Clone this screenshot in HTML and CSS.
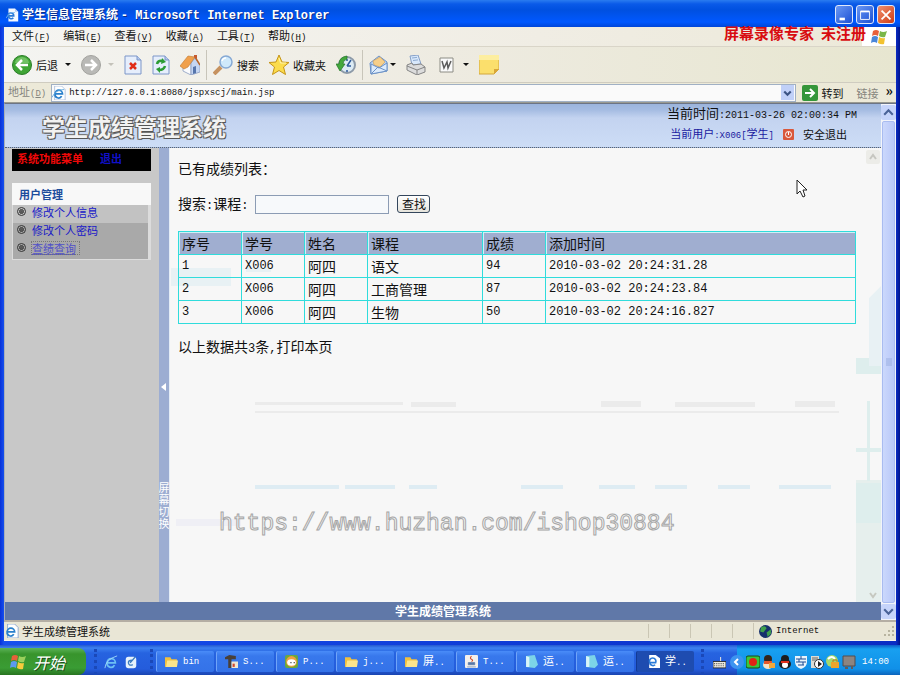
FILE: index.html
```html
<!DOCTYPE html>
<html lang="zh-CN">
<head>
    <meta charset="UTF-8">
    <meta name="viewport" content="width=device-width, initial-scale=1.0">
    <title>学生信息管理系统</title>
    <link rel="stylesheet" href="styles.css">
</head>
<body>
    <div class="window">
        <div class="titlebar">
            <svg class="icon16" viewBox="0 0 16 16"><path d="M3 0h8l4 4v12H3z" fill="#f4f8ff"/><path d="M11 0v4h4" fill="#b8cdf0"/><path d="M9 9H2.500a3.500 3.500 0 1 1 7 0zM3 9a3.500 3.500 0 0 0 6 2.500" fill="none" stroke="#2a7ad8" stroke-width="2"/><path d="M0 12Q4 4 11 5" fill="none" stroke="#73b5ee"/></svg>
            <h1>学生信息管理系统 <span class="mono">- Microsoft Internet Explorer</span></h1>
            <button class="win-btn" aria-label="最小化"><svg viewBox="0 0 18 18"><path d="M4 12h6v3H4z" fill="#fff"/></svg></button>
            <button class="win-btn" aria-label="最大化"><svg viewBox="0 0 18 18"><path d="M4 5h10v9H4z" fill="none" stroke="#fff"/><path d="M4 4h10v2H4z" fill="#fff"/></svg></button>
            <button class="win-btn close" aria-label="关闭"><svg viewBox="0 0 18 18"><path d="M4 4l10 10M14 4L4 14" stroke="#fff" stroke-width="2"/></svg></button>
        </div>

        <nav class="menubar">
            <button>文件<span class="mono">(<u>F</u>)</span></button>
            <button>编辑<span class="mono">(<u>E</u>)</span></button>
            <button>查看<span class="mono">(<u>V</u>)</span></button>
            <button>收藏<span class="mono">(<u>A</u>)</span></button>
            <button>工具<span class="mono">(<u>T</u>)</span></button>
            <button>帮助<span class="mono">(<u>H</u>)</span></button>
            <div class="flag-box">
                <svg class="icon18" viewBox="0 0 18 18"><path d="M3 3q3-2 6 0L8 8Q5 6 2 8z" fill="#e8603a"/><path d="M10 3q3 2 7 0l-2 6q-3 1-6-1z" fill="#7ab648"/><path d="M2 9q3-2 6 0l-1 6q-3-2-6 0z" fill="#4a86d8"/><path d="M9 9q3 2 6 1l-1 6q-3 1-6-1z" fill="#f2c230"/></svg>
            </div>
            <div class="recorder-mark"><span>屏幕录像专家</span><span>未注册</span></div>
        </nav>

        <div class="toolbar">
            <button class="tool"><svg class="icon20" viewBox="0 0 20 20"><circle cx="10" cy="10" r="9.500" fill="#3fa535" stroke="#2b7d28"/><path d="M3 8a7 6 0 0 1 14 0" fill="#8fd480" opacity=".6"/><path d="M16 10H6M10 5l-5 5 5 5" fill="none" stroke="#fff" stroke-width="2.500"/></svg>后退</button>
            <span class="drop"></span>
            <button class="tool" aria-label="前进"><svg class="icon20" viewBox="0 0 20 20"><circle cx="10" cy="10" r="9.500" fill="#b9b9b6" stroke="#a2a29e"/><path d="M4 10h10M10 5l5 5-5 5" fill="none" stroke="#fff" stroke-width="2.500"/></svg></button>
            <span class="drop pale"></span>
            <button class="tool" aria-label="停止"><svg class="icon18" viewBox="0 0 18 20"><path d="M1 1h12l4 4v14H1z" fill="#e6eefc" stroke="#7c96c8"/><path d="M13 1v4h4" fill="#b4c8ec" stroke="#7c96c8"/><path d="M6 8l6 6M12 8l-6 6" stroke="#e02c18" stroke-width="2.500"/></svg></button>
            <button class="tool" aria-label="刷新"><svg class="icon18" viewBox="0 0 18 20"><path d="M1 1h12l4 4v14H1z" fill="#e6eefc" stroke="#7c96c8"/><path d="M13 1v4h4" fill="#b4c8ec" stroke="#7c96c8"/><path d="M5 9q1-4 6-3M13 11q-1 4-6 4" fill="none" stroke="#2c9c34" stroke-width="2.500"/><path d="M10 3l4 4-5 2zM8 12v6l-4-4z" fill="#2c9c34"/></svg></button>
            <button class="tool" aria-label="主页"><svg class="icon20" viewBox="0 0 20 20"><path d="M3 11l8-5v14l-8-4z" fill="#fafbfd" stroke="#8a9cc0" stroke-width=".8"/><path d="M11 20V8l4-5 5 7v7z" fill="#c5d6f2" stroke="#8a9cc0" stroke-width=".8"/><path d="M0 11L8 1l7 1-7 10-4 2z" fill="#f0a04c" stroke="#c07830" stroke-width=".6"/><path d="M15 2l5 8" stroke="#b8652a" stroke-width="1.500"/><path d="M14 0h3v4l-3-2z" fill="#c65a30"/><path d="M13 12l3-1v7l-3 1z" fill="#5675ac"/></svg></button>
            <span class="sep"></span>
            <button class="tool"><svg class="icon20" viewBox="0 0 20 20"><path d="M8 12l-7 7" stroke="#c69260" stroke-width="4"/><circle cx="13" cy="7" r="6" fill="#cfe9fb" stroke="#86a9d4" stroke-width="1.500"/><path d="M9 6a4 4 0 0 1 4-3" fill="none" stroke="#fff" stroke-width="1.500"/></svg>搜索</button>
            <button class="tool"><svg class="icon20" viewBox="0 0 20 20"><path d="M10 0l3 7 7 .5-5.500 4.500 2 7.500L10 15.500 3.500 19.500l2-7.500L0 7.500 7 7z" fill="#fbdc4c" stroke="#c59416"/><path d="M10 3l1.500 5H17" fill="none" stroke="#fff4b0"/></svg>收藏夹</button>
            <button class="tool" aria-label="历史"><svg class="icon20" viewBox="0 0 20 20"><circle cx="11" cy="10" r="8" fill="#dcebf4" stroke="#8d9aa8" stroke-width="2"/><path d="M11 11l4-6M11 11h4M11 4v2M11 15v2" stroke="#2c5a9a" stroke-width="1.500"/><path d="M11 1Q3 2 3 9H0l4 7 5-7H7q0-4 4-5z" fill="#43a83c" stroke="#25752a" stroke-width=".7"/></svg></button>
            <span class="sep"></span>
            <button class="tool"><svg class="icon20" viewBox="0 0 20 20"><path d="M1 8l9-7 8 6v9L2 19z" fill="#b6d3f6" stroke="#6b91c6"/><path d="M4 6l7-4 5 5-5 5-6-2z" fill="#f6cf8a" stroke="#cda464" stroke-width=".7"/><path d="M2 9l8 4 8-5v8L2 19z" fill="#dcebfc" stroke="#6b91c6"/><path d="M2 19l7-7 9 4" fill="none" stroke="#6b91c6"/></svg><span class="drop" title="邮件"></span></button>
            <button class="tool" aria-label="打印"><svg class="icon20" viewBox="0 0 20 20"><path d="M4 1l8-1 3 9-9 1z" fill="#d8e8fb" stroke="#86a0c8"/><path d="M6 3l5-.6M7 5.500l5-.6" stroke="#8eabd2"/><path d="M1 10l5-2 1 2 8-1 4 3v5l-8 3-10-5z" fill="#dcdcdc" stroke="#858585"/><path d="M1 11l10 4 8-3M11 15v5" fill="none" stroke="#858585"/></svg></button>
            <button class="tool" aria-label="编辑"><svg class="icon20" viewBox="0 0 20 20"><path d="M4 3h13v14H4z" fill="#fafafa" stroke="#8c8c84"/><path d="M6 6l2 7 3-6 1 6 3-7" fill="none" stroke="#5c5c5c" stroke-width="1.500"/></svg></button>
            <span class="drop"></span>
            <button class="tool" aria-label="便笺"><svg class="icon20" viewBox="0 0 20 20"><path d="M0 0h20v14l-5 5H0z" fill="#fbdf6c" stroke="#d2a63a"/><path d="M0 0h20v5H0z" fill="#fdeea0"/><path d="M20 14h-5v5z" fill="#d9a738"/></svg></button>
        </div>

        <div class="addressbar">
            <label for="address">地址<span class="mono">(<u>D</u>)</span></label>
            <div class="address-box">
                <svg class="icon14" viewBox="0 0 16 16"><path d="M3 0h8l4 4v12H3z" fill="#fff" stroke="#9ab0d4" stroke-width=".8"/><path d="M12 9H3.500a4 4 0 1 1 8.500 0zM3.500 9a4 4 0 0 0 7.500 2.500" fill="none" stroke="#2a80cc" stroke-width="2"/><path d="M0 13Q4 4 14 4" fill="none" stroke="#5fa8dc"/></svg>
                <input type="text" id="address" class="mono" value="http://127.0.0.1:8080/jspxscj/main.jsp">
                <button class="address-drop" aria-label="展开"><svg viewBox="0 0 12 16"><path d="M3 6l3 3 3-3" fill="none" stroke="#3c5484" stroke-width="2"/></svg></button>
            </div>
            <button class="go"><svg class="icon16" viewBox="0 0 16 16"><rect width="16" height="16" rx="2" fill="#35963a"/><path d="M3 8h9M8 4l4 4-4 4" fill="none" stroke="#fff" stroke-width="2"/></svg>转到</button>
            <span class="links">链接</span>
            <span class="more">»</span>
        </div>

        <div class="viewport">
            <div class="page">
                <header class="page-header">
                    <h2>学生成绩管理系统</h2>
                    <div class="page-info">
                        <div class="clock">当前时间<span class="mono">:2011-03-26 02:00:34 PM</span></div>
                        <div class="user">
                            <span class="user-name">当前用户<span class="mono">:X006[</span>学生<span class="mono">]</span></span>
                            <svg class="icon11" viewBox="0 0 11 11"><rect width="11" height="11" rx="1" fill="#d9583c"/><circle cx="5.500" cy="5.500" r="3" fill="none" stroke="#fff"/><path d="M5.500 3v3" stroke="#fff"/></svg>
                            <a href="#">安全退出</a>
                        </div>
                    </div>
                </header>

                <div class="page-body">
                    <aside class="sidebar">
                        <div class="menu-title"><span>系统功能菜单</span><a href="#">退出</a></div>
                        <div class="menu-panel">
                            <h3>用户管理</h3>
                            <ul>
                                <li><a href="#">修改个人信息</a></li>
                                <li class="dark"><a href="#">修改个人密码</a></li>
                                <li class="dark"><a href="#" class="current">查绩查询</a></li>
                            </ul>
                        </div>
                    </aside>
                    <button class="splitter" aria-label="屏幕切换">
                        <svg viewBox="0 0 10 10"><path d="M7 1v8L2 5z" fill="#fff"/></svg>
                        <span>屏幕切换</span>
                    </button>
                    <main class="main">
                        <svg class="haze" viewBox="0 0 710 454" width="710" height="454" aria-hidden="true">
                            <path d="M685 332h25v122h-25z" fill="#e6efed"/>
                            <path d="M685 335h25v40h-25zM696 253h3v80h-3zM685 300h25v4h-25zM685 210h25v16h-25z" fill="#deeeed"/>
                            <path d="M698 150l12-12v80h-12zM0 120h60v18H0zM75 119h25v5H75z" fill="#e8f1f4"/>
                            <path d="M84 254h148v3H84zM84 263h584v2H84zM240 254h45v5h-45zM430 253h40v6h-40zM504 254h80v5h-80zM624 253h40v6h-40z" fill="#ebebeb"/>
                            <path d="M84 337h84v4H84zM174 337h50v4h-50zM238 337h28v4h-28zM350 337h42v4h-42zM428 337h36v4h-36zM484 337h32v4h-32zM547 337h32v4h-32zM608 337h52v4h-52z" fill="#deecf3"/>
                            <path d="M5 371h65v7H5z" fill="#efeff5"/>
                        </svg>
                        <p>已有成绩列表：</p>
                        <form class="search" onsubmit="return false">
                            <label for="course">搜索<span class="mono">:</span>课程<span class="mono">:</span></label>
                            <input type="text" id="course">
                            <button type="submit">查找</button>
                        </form>
                        <table>
                            <thead>
                                <tr><th class="narrow">序号</th><th class="narrow">学号</th><th class="narrow">姓名</th><th class="course">课程</th><th class="narrow">成绩</th><th>添加时间</th></tr>
                            </thead>
                            <tbody>
                                <tr><td class="mono">1</td><td class="mono">X006</td><td>阿四</td><td>语文</td><td class="mono">94</td><td class="mono">2010-03-02 20:24:31.28</td></tr>
                                <tr><td class="mono">2</td><td class="mono">X006</td><td>阿四</td><td>工商管理</td><td class="mono">87</td><td class="mono">2010-03-02 20:24:23.84</td></tr>
                                <tr><td class="mono">3</td><td class="mono">X006</td><td>阿四</td><td>生物</td><td class="mono">50</td><td class="mono">2010-03-02 20:24:16.827</td></tr>
                            </tbody>
                        </table>
                        <p>以上数据共<span class="mono">3</span>条<span class="mono">,</span>打印本页</p>
                        <svg class="inner-arrow top" viewBox="0 0 14 14"><rect width="14" height="14" rx="2" fill="#ecece8"/><path d="M4 9l3-4 3 4" fill="none" stroke="#c6c6c0" stroke-width="2"/></svg>
                        <svg class="inner-arrow bottom" viewBox="0 0 14 14"><path d="M4 5l3 4 3-4" fill="none" stroke="#c6c8c0" stroke-width="2"/></svg>
                        <div class="watermark">https://www.huzhan.com/ishop30884</div>
                    </main>
                </div>

                <footer class="page-footer">学生成绩管理系统</footer>
            </div>
            <div class="scrollbar">
                <button aria-label="向上"><svg viewBox="0 0 14 14"><path d="M3 9l4-4 4 4" fill="none" stroke="#4a6398" stroke-width="2"/></svg></button>
                <div class="thumb"><svg viewBox="0 0 8 8"><path d="M1 1h6M1 3h6M1 5h6M1 7h6" stroke="#9aaee0"/></svg></div>
                <button aria-label="向下"><svg viewBox="0 0 14 14"><path d="M3 5l4 4 4-4" fill="none" stroke="#4a6398" stroke-width="2"/></svg></button>
            </div>
        </div>

        <div class="statusbar">
            <svg class="icon14" viewBox="0 0 16 16"><path d="M3 0h8l4 4v12H3z" fill="#fff" stroke="#6a8cc4" stroke-width=".8"/><path d="M11 9H2.500a4 4 0 1 1 8.500 0zM2.500 9a4 4 0 0 0 7.500 2.500" fill="none" stroke="#2a80cc" stroke-width="2"/></svg>
            <span class="status-text">学生成绩管理系统</span>
            <i></i><i></i><i></i><i></i><i></i>
            <span class="zone"><svg class="icon12" viewBox="0 0 12 12"><circle cx="6" cy="6" r="6" fill="#16306c"/><path d="M2 2q4-2 5 1L4 7 1 6zM7 7l4-3v4l-3 3z" fill="#3fa04c"/></svg><span class="mono">Internet</span></span>
            <svg class="grip" viewBox="0 0 12 12"><path d="M8 1h2v2H8zM8 5h2v2H8zM4 5h2v2H4zM8 9h2v2H8zM4 9h2v2H4zM0 9h2v2H0z" fill="#b8b4a0"/></svg>
        </div>
    </div>

    <div class="taskbar">
        <button class="start"><svg class="icon18" viewBox="0 0 18 18"><path d="M3 3q3-2 6 0L8 8Q5 6 2 8z" fill="#e8603a"/><path d="M10 3q3 2 7 0l-2 6q-3 1-6-1z" fill="#9ad05c"/><path d="M2 9q3-2 6 0l-1 6q-3-2-6 0z" fill="#5c9af0"/><path d="M9 9q3 2 6 1l-1 6q-3 1-6-1z" fill="#f6cc3c"/></svg>开始</button>
        <div class="quick">
            <svg class="icon14" viewBox="0 0 16 16"><path d="M13 9H3.500a4.500 4.500 0 1 1 9.500 0zM3.500 9a4.500 4.500 0 0 0 8.500 2.500" fill="none" stroke="#6cc0f4" stroke-width="2"/><path d="M1 15Q2 5 15 1" fill="none" stroke="#a4dcfa"/></svg>
            <svg class="icon14" viewBox="0 0 16 16"><rect x="2" y="2" width="12" height="13" rx="3" fill="#e6f2fc"/><path d="M5 9q0-3 4-3M5 9q1 4 5 2M7 9l6-7" fill="none" stroke="#3c7cc0" stroke-width="1.500"/></svg>
        </div>
        <div class="tasks">
            <button><svg class="icon12" viewBox="0 0 12 12"><path d="M0 2h5l1 2h5v7H0z" fill="#f0c040"/><path d="M2 5h10l-1 6H1z" fill="#fbe58c"/></svg><span class="mono">bin</span></button>
            <button><svg class="icon12" viewBox="0 0 12 12"><path d="M0 2l4-2 6 1v3H6v8H3V4H0z" fill="#4a4038"/><path d="M6 6h6v6H6z" fill="#efe6d2"/><path d="M7 8h2v3H7z" fill="#d04830"/></svg><span class="mono">S...</span></button>
            <button><svg class="icon12" viewBox="0 0 12 12"><rect width="12" height="12" rx="2" fill="#6ca83c"/><circle cx="6" cy="6" r="5" fill="#f0a040"/><ellipse cx="6" cy="7" rx="4" ry="3" fill="#fff"/><path d="M5 7h1M8 7h1" stroke="#333"/></svg><span class="mono">P...</span></button>
            <button><svg class="icon12" viewBox="0 0 12 12"><path d="M0 2h5l1 2h5v7H0z" fill="#f0c040"/><path d="M2 5h10l-1 6H1z" fill="#fbe58c"/></svg><span class="mono">j...</span></button>
            <button><svg class="icon12" viewBox="0 0 12 12"><path d="M0 2h5l1 2h5v7H0z" fill="#f0c040"/><path d="M2 5h10l-1 6H1z" fill="#fbe58c"/></svg><span>屏<span class="mono">..</span></span></button>
            <button><svg class="icon12" viewBox="0 0 12 12"><rect width="12" height="12" rx="1" fill="#f4f0ec"/><path d="M6 1q-2 2 0 3t0 2" fill="none" stroke="#d04c28"/><path d="M3 7h6v2H3zM2 11h8" fill="#5878a8" stroke="#5878a8" stroke-width=".6"/></svg><span class="mono">T...</span></button>
            <button><svg class="icon12" viewBox="0 0 12 12"><path d="M1 1l8-1 3 9-3 3-8-1z" fill="#7cd4e8"/><path d="M1 1l3 1v9l-3 0z" fill="#d8f4f8"/></svg><span>运<span class="mono">..</span></span></button>
            <button><svg class="icon12" viewBox="0 0 12 12"><path d="M1 1l8-1 3 9-3 3-8-1z" fill="#7cd4e8"/><path d="M1 1l3 1v9l-3 0z" fill="#d8f4f8"/></svg><span>运<span class="mono">..</span></span></button>
            <button class="active"><svg class="icon12" viewBox="0 0 12 12"><path d="M2 0h6l4 3v9H2z" fill="#fff"/><path d="M8 7H2.500a3 3 0 1 1 5.500 0zM2.500 7a3 3 0 0 0 5 2" fill="none" stroke="#2a7ad8" stroke-width="1.500"/></svg><span>学<span class="mono">..</span></span></button>
        </div>
        <div class="lang"><svg class="icon12" viewBox="0 0 12 12"><path d="M7 5V1" stroke="#ddd"/><rect y="5" width="12" height="6" fill="#f0ece0" stroke="#222" stroke-width=".8"/><path d="M1 7h10M1 9h10" stroke="#555" stroke-dasharray="1 1"/></svg></div>
        <div class="tray">
            <svg class="icon14 chevron" viewBox="0 0 14 14"><circle cx="7" cy="7" r="7" fill="#3c94f0"/><path d="M8 4L5 7l3 3" fill="none" stroke="#fff" stroke-width="2"/></svg>
            <svg class="icon14" viewBox="0 0 14 14"><rect y="1" width="14" height="12" rx="2" fill="#38c83c" stroke="#184818"/><circle cx="7" cy="7" r="4" fill="#e02414"/></svg>
            <svg class="icon14" viewBox="0 0 14 14"><ellipse cx="6" cy="10" rx="5" ry="4" fill="#f4e2c4"/><circle cx="6" cy="4" r="4" fill="#33241c"/><path d="M2 6h8v3H2z" fill="#e4582c"/><path d="M7 8h6v5H7z" fill="#f0a83c"/></svg>
            <svg class="icon14" viewBox="0 0 14 14"><ellipse cx="7" cy="9" rx="6" ry="5" fill="#1c1c1c"/><circle cx="7" cy="4" r="4" fill="#1c1c1c"/><ellipse cx="7" cy="10" rx="3" ry="3" fill="#fff"/><path d="M3 6h8v2H3z" fill="#e0301c"/></svg>
            <svg class="icon14" viewBox="0 0 14 14"><path d="M1 1h12v6q0 5-6 7-6-2-6-7z" fill="#e8f4fc"/><path d="M2 4h10M2 7h10M4 10h6M7 1v3M5 4v3M9 7v3" stroke="#1c4c94"/></svg>
            <svg class="icon14" viewBox="0 0 14 14"><path d="M1 1h8v12H1z" fill="#dcdcd4"/><path d="M2 3h6M2 5h6" stroke="#666"/><circle cx="9" cy="9" r="4.500" fill="#fff" stroke="#333"/><path d="M8 6v6l4-3z" fill="#222"/></svg>
            <svg class="icon14" viewBox="0 0 14 14"><circle cx="6" cy="6" r="6" fill="#a4d86c"/><path d="M2 4q4-4 7 0" fill="none" stroke="#fff" stroke-width="2"/><path d="M5 7h8v6H5z" fill="#eda42c"/><path d="M7 7V5h4v2" fill="none" stroke="#b87818"/></svg>
            <svg class="icon14" viewBox="0 0 14 14"><path d="M1 1h12v10H1z" fill="#8c8480" stroke="#554c4c"/><path d="M3 12h3v2H3zM9 11h2v3H9z" fill="#625c5c"/></svg>
            <span class="mono">14:00</span>
        </div>
    </div>

    <svg class="cursor" viewBox="0 0 12 19"><path d="M1 1v14l3-3 3 6 2-1-2-6h4z" fill="#fff" stroke="#222"/></svg>
</body>
</html>
```

FILE: styles.css
```css
*, *::before {
    box-sizing: border-box;
}
body {
    margin: 0;
    height: 100vh;
    min-height: 500px;
    display: flex;
    flex-direction: column;
    overflow: hidden;
    font-family: "Noto Sans CJK SC", sans-serif;
    font-size: 11px;
    line-height: 16px;
    color: #111;
    background: #245edb;
}
button, input {
    font: inherit;
    color: inherit;
    padding: 0;
    margin: 0;
    border: 0;
    background: none;
}
svg {
    display: block;
    flex: none;
}
h1, h2, h3, p, ul {
    margin: 0;
    padding: 0;
}
a {
    text-decoration: none;
}
.mono {
    font-family: "Liberation Mono", monospace;
    font-size: 9px;
}
.icon11 { width: 11px; height: 11px; }
.icon12 { width: 13px; height: 13px; }
.icon14 { width: 14px; height: 14px; }
.icon16 { width: 16px; height: 16px; }
.icon18 { width: 18px; height: 20px; }
.icon20 { width: 20px; height: 20px; }

/* browser window */
.window {
    flex: 1;
    min-height: 0;
    display: flex;
    flex-direction: column;
    padding: 0 4px 4px;
    background: linear-gradient(90deg, #0831d9, #1650ee 4px, #0a2cc4 calc(100% - 4px), #00138c);
}
.titlebar {
    display: flex;
    align-items: center;
    gap: 3px;
    height: 27px;
    margin: 0 -4px;
    padding: 2px 5px 0 6px;
    color: #fff;
    background: linear-gradient(#2a7cf0, #0a5ae8 4px, #0050e0 10px, #0058ff 22px, #0046d8);
}
.titlebar h1 {
    flex: 1;
    font-size: 12px;
    font-weight: bold;
    text-shadow: 1px 1px #0a2c88;
}
.titlebar h1 .mono {
    font-size: 12px;
}
.titlebar .icon16 {
    width: 13px;
}
.win-btn {
    width: 18px;
    height: 19px;
    border: 1px solid #dfe8fb;
    border-radius: 3px;
    background: linear-gradient(135deg, #6a98f4, #1c50d4);
}
.win-btn.close {
    background: linear-gradient(135deg, #f09070, #d03c14);
}
.menubar {
    position: relative;
    display: flex;
    align-items: center;
    gap: 13px;
    height: 20px;
    padding-left: 8px;
    background: linear-gradient(90deg, #f5f5f2, #f0ede4 60%, #ece9d8);
    border-bottom: 1px solid #d9d5c8;
}
.flag-box {
    display: flex;
    justify-content: center;
    width: 34px;
    height: 19px;
    margin-left: auto;
    background: #fff;
}
.recorder-mark {
    position: absolute;
    right: 30px;
    top: -3px;
    display: flex;
    gap: 7px;
    font-size: 15px;
    font-weight: bold;
    line-height: 18px;
    color: #d80c10;
}
.toolbar {
    display: flex;
    align-items: center;
    gap: 10px;
    height: 36px;
    padding-left: 8px;
    background: linear-gradient(90deg, #f4f4f1, #eeebe1 50%, #e7e6d0);
    border-bottom: 1px solid #cfccc0;
}
.tool {
    display: flex;
    align-items: center;
    gap: 4px;
}
.drop {
    margin-left: -3px;
    border: 3px solid transparent;
    border-top-color: #111;
    border-bottom: 0;
}
.drop.pale {
    border-top-color: #c4c2ba;
}
.sep {
    width: 1px;
    height: 30px;
    margin: 0 -4px;
    background: #c8c5ba;
}
.addressbar {
    display: flex;
    align-items: center;
    height: 20px;
    padding: 0 3px 0 4px;
    background: #ece9d8;
    border-bottom: 1px solid #9a9a90;
}
.addressbar label, .links {
    color: #85857d;
}
.address-box {
    flex: 1;
    display: flex;
    align-items: center;
    gap: 3px;
    height: 18px;
    margin: 0 6px 0 5px;
    padding: 0 1px 0 0;
    background: #fafafa;
    border: 1px solid #a0b0c4;
}
.address-box input {
    flex: 1;
    min-width: 0;
    outline: 0;
}
.address-drop {
    width: 13px;
    height: 15px;
    background: #c0d0f8;
}
.go {
    display: flex;
    align-items: center;
    gap: 4px;
}
.links {
    margin-left: 13px;
}
.more {
    margin: -6px 0 0 7px;
    font-size: 14px;
    font-weight: bold;
}

/* page inside the browser */
.viewport {
    flex: 1;
    min-height: 0;
    display: flex;
    border-top: 1px solid #6c7484;
    border-left: 1px solid #a8b0b8;
}
.page {
    flex: 1;
    min-width: 0;
    display: flex;
    flex-direction: column;
}
.page-header {
    display: flex;
    justify-content: space-between;
    height: 44px;
    padding: 0 24px 0 37px;
    background: linear-gradient(#9bb4dc, #a5bce2 6px, #c3d3f0 14px, #cdddf6);
    border-bottom: 1px dotted #5c6470;
}
.page-header h2 {
    font-size: 23px;
    font-weight: bold;
    line-height: 44px;
    color: #f2f2f2;
    text-shadow: 1px 1px #555, -1px 1px #666, 1px -1px #777, -1px -1px #777;
}
.page-info {
    display: flex;
    flex-direction: column;
    align-items: flex-end;
}
.clock {
    font-size: 13px;
    line-height: 17px;
}
.clock .mono {
    font-size: 10px;
}
.user {
    display: flex;
    align-items: center;
    gap: 9px;
    height: 20px;
    padding-right: 10px;
}
.user-name {
    color: #1a1aa0;
}
.user a {
    color: #111;
}
.page-body {
    flex: 1;
    min-height: 0;
    display: flex;
}
.sidebar {
    width: 154px;
    padding: 1px 8px 0 7px;
    background: #c8c8c8;
}
.menu-title {
    display: flex;
    gap: 17px;
    height: 22px;
    padding-left: 5px;
    line-height: 18px;
    font-weight: bold;
    color: #f00808;
    background: #000;
}
.menu-title a {
    color: #1010c8;
}
.menu-panel {
    margin-top: 12px;
    background: #dcdcdc;
    border-bottom: 1px solid #dcdcdc;
}
.menu-panel h3 {
    height: 22px;
    padding-left: 7px;
    font-size: 11px;
    line-height: 22px;
    color: #1c4c9c;
    background: #f8f8f8;
}
.menu-panel ul {
    list-style: none;
    margin: 0 3px 0 1px;
}
.menu-panel li {
    display: flex;
    align-items: center;
    gap: 6px;
    height: 18px;
    padding: 0 0 5px 4px;
    background: #c2c2c2;
}
.menu-panel li::before {
    content: "";
    width: 9px;
    height: 9px;
    border: 3px double #333;
    border-radius: 50%;
    background: #555;
    background-clip: content-box;
}
.menu-panel li.dark {
    background: #a9a9a9;
}
.menu-panel li a {
    color: #1818c8;
    line-height: 12px;
}
.menu-panel li .current {
    padding-right: 3px;
    color: #5050c8;
    text-decoration: underline;
    outline: 1px dotted #777;
}
.splitter {
    display: flex;
    flex-direction: column;
    align-items: center;
    width: 11px;
    padding-top: 234px;
    overflow: hidden;
    color: #fff;
    line-height: 12px;
    background: #9cadd2;
    border-right: 1px solid #e4ecf6;
}
.splitter svg {
    width: 10px;
    height: 10px;
}
.splitter span {
    width: 11px;
    margin-top: 89px;
}
.main {
    position: relative;
    flex: 1;
    min-width: 0;
    overflow: hidden;
    padding: 10px 25px 0 8px;
    font-size: 14px;
    line-height: 20px;
    background: #f7f7f7;
}
.main .mono {
    font-size: 12px;
}
.main p, .search, .main table {
    position: relative;
}
.haze {
    position: absolute;
    top: 0;
    right: 0;
}
.search {
    display: flex;
    align-items: center;
    height: 20px;
    margin: 16px 0 17px;
}
.search input {
    width: 134px;
    height: 19px;
    margin: 0 8px 0 7px;
    padding: 0 3px;
    border: 1px solid #8c9cb4;
    background: #f7f9fb;
}
.search button {
    width: 33px;
    height: 18px;
    font-size: 12px;
    line-height: 14px;
    border: 1px solid #34465c;
    border-radius: 3px;
    background: linear-gradient(#fff, #e6e4dc);
}
table {
    width: 100%;
    margin-bottom: 12px;
    table-layout: fixed;
    border-spacing: 0;
    border: 1px solid #30dcdc;
    border-width: 1px 0 0 1px;
}
th, td {
    height: 23px;
    padding: 0 3px;
    font-weight: normal;
    text-align: left;
    border: 1px solid #30dcdc;
    border-width: 0 1px 1px 0;
}
th {
    background: #a0aed0;
    box-shadow: inset 1px 1px #d0f0f6;
}
.narrow {
    width: 63px;
}
.course {
    width: 115px;
}
.inner-arrow {
    position: absolute;
    right: 1px;
    width: 14px;
    height: 14px;
}
.inner-arrow.top {
    top: 2px;
}
.inner-arrow.bottom {
    bottom: 0;
}
.watermark {
    position: absolute;
    left: 49px;
    top: 362px;
    font-family: "Liberation Mono", monospace;
    font-size: 23px;
    line-height: 28px;
    color: #f7f7f7;
    -webkit-text-stroke: 1px #a6a6a6;
}
.page-footer {
    height: 18px;
    font-size: 12px;
    font-weight: bold;
    line-height: 18px;
    text-align: center;
    color: #fff;
    background: #6078a8;
}
.scrollbar {
    display: flex;
    flex-direction: column;
    gap: 1px;
    width: 15px;
    padding: 1px 0;
    background: #f2f4fa;
}
.scrollbar button {
    height: 15px;
    border-radius: 2px;
    background: #c6d4fa;
}
.thumb {
    flex: 1;
    display: flex;
    align-items: center;
    justify-content: center;
    margin: 0 1px;
    border: 1px solid #a9bcf0;
    border-radius: 2px;
    background: linear-gradient(90deg, #cbd8fc, #b9c8f8);
}
.thumb svg {
    width: 8px;
}
.statusbar {
    display: flex;
    align-items: center;
    height: 21px;
    padding-left: 1px;
    background: #e9e6d6;
    border-top: 2px solid #b4aea4;
    border-bottom: 1px solid #f6f4ec;
}
.status-text {
    flex: 1;
    padding-left: 3px;
}
.statusbar i {
    width: 21px;
    height: 14px;
    border-left: 1px solid #cac6b4;
}
.zone {
    display: flex;
    align-items: center;
    gap: 4px;
    width: 131px;
    padding-left: 5px;
    border-left: 1px solid #cac6b4;
}
.grip {
    width: 12px;
    height: 12px;
}

/* taskbar */
.taskbar {
    display: flex;
    height: 30px;
    color: #fff;
    background: linear-gradient(#2458d0, #3c80f0 3px, #2663e0 8px, #245cdc 24px, #1a44b0);
}
.start {
    display: flex;
    align-items: center;
    gap: 6px;
    width: 86px;
    margin-top: 3px;
    padding-left: 9px;
    font-size: 16px;
    font-style: italic;
    border-radius: 0 8px 8px 0;
    background: linear-gradient(#5cb458, #38942c 6px, #3a9c34 20px, #287420);
    text-shadow: 1px 1px #1c501c;
}
.quick {
    display: flex;
    align-items: center;
    gap: 6px;
    width: 59px;
    margin: 4px 3px 0 8px;
    padding-left: 7px;
    border: 3px dotted #1a48b8;
    border-width: 0 3px;
}
.tasks {
    flex: 1;
    min-width: 0;
    display: flex;
    gap: 2px;
    margin: 6px 0 3px;
}
.tasks button {
    flex: 1;
    max-width: 58px;
    display: flex;
    align-items: center;
    gap: 5px;
    padding-left: 8px;
    border-radius: 2px;
    border-left: 1px solid #70a4f8;
    background: linear-gradient(#4a8cf8, #3878ec 5px, #3472e8);
}
.tasks .active {
    padding-left: 10px;
    border-color: #123a94;
    background: #1e4cb0;
}
.lang {
    display: flex;
    align-items: center;
    width: 36px;
    margin-top: 4px;
    padding-left: 9px;
    border-left: 3px dotted #1a48b8;
}
.tray {
    display: flex;
    align-items: center;
    gap: 2px;
    width: 163px;
    padding: 3px 11px 0 0;
    background: linear-gradient(#0c5cc8, #18a0f0 4px, #1090e8 24px, #0c64bc);
}
.tray .chevron {
    margin-left: -7px;
}
.tray .mono {
    margin-left: auto;
}

.cursor {
    position: absolute;
    left: 796px;
    top: 179px;
    width: 12px;
    height: 19px;
}
```
